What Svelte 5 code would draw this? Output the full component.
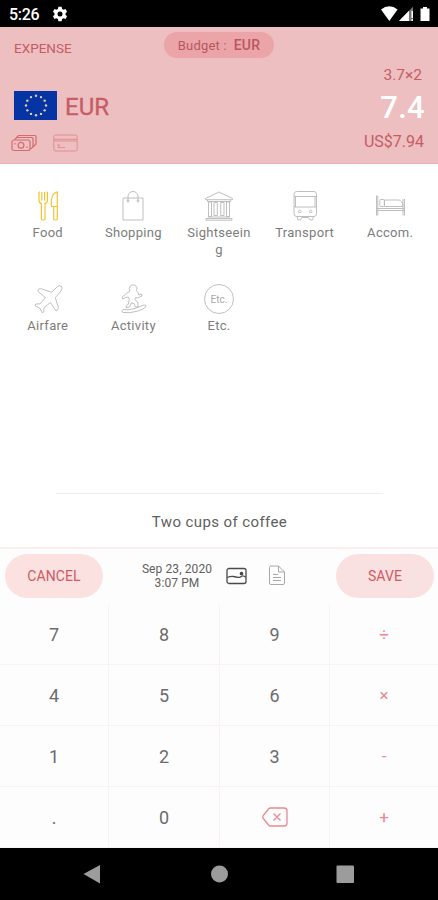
<script>
  let selected = $state("Food")
  let budget = $state("EUR")

  const categories = ["Food", "Shopping", "Sightseeing", "Transport", "Accom.", "Airfare", "Activity", "Etc."]
  const keys = ["7", "8", "9", "÷", "4", "5", "6", "×", "1", "2", "3", "-", ".", "0", "del", "+"]
  const operators = ["÷", "×", "-", "+"]

  // 12 flag stars on a circle
  const stars = Array.from({ length: 12 }, (_, i) => ({
    x: 22 + 10 * Math.sin((i * Math.PI) / 6),
    y: 14.5 - 9.7 * Math.cos((i * Math.PI) / 6),
  }))
</script>

{#snippet icon(name)}
  <svg class="icon" width="32" height="32" viewBox="0 0 32 32">
    {#if name === "Food"}
      <path d="M7 2v8q0 3 2.4 3.6V29q0 1 1.8 1t1.8-1V13.600q2.400-.6 2.400-3.600V2M9.800 2v8.500M12.600 2v8.500M7 2h1M14.400 2h1" />
      <path d="M25.300 1.800v27.200q0 1-1.800 1t-1.800-1V16.500h-2.200q-1.500-12.500 5.800-14.700zM21.700 16.500h3.600" />
    {:else if name === "Shopping"}
      <path d="M6 8h20v22H6z" />
      <path d="M11 11V6.500a5 5 0 0 1 10 0V11" />
      <circle cx="11" cy="11" r="1" /><circle cx="21" cy="11" r="1" />
    {:else if name === "Sightseeing"}
      <path d="M16 2 2.500 8.500v1.200h27V8.500zM4.500 10v1.500h23V10M5 27h22M3 28.500h26v1.700H3z" />
      <path d="M5.500 12v14.500h3V12zM11 12.500h3.300v13H11zM17.700 12.500H21v13h-3.300zM23.500 12v14.500h3V12z" />
    {:else if name === "Transport"}
      <path d="M7.500 1.500h17.500q2.500 0 2.500 3v19q0 3-2.500 3H7.500q-2.500 0-2.500-3v-19q0-3 2.500-3zM5 6.500h22.500M5 17h22.500M6.500 6.500V17M26 6.500V17" />
      <path d="M8 26.500l1 3.500h2.500l1.500-2.500h6.500l1.500 2.500h2.500l1-3.500" />
      <circle cx="10.800" cy="21.500" r="1.300" /><circle cx="21.700" cy="21.500" r="1.300" />
    {:else if name === "Accom."}
      <path d="M2.500 5.500v20M3.800 5.500v20M29 9v16.500M30.500 9v16.500M3 18.500h27.500M3 20.500h27.500" />
      <rect x="5.800" y="9.500" width="4.500" height="7" rx="1" />
      <path d="M10.500 10h14.500q3.500.5 4 6.500H10.500z" />
    {:else if name === "Airfare"}
      <path d="M29 3.200q-1.700-1.300-3.500.4L19.500 9.300 8.500 5.500q-2.500.3-2.700 2.700l7.500 6.300-5 6.300-4.500.2-.8 1.700 4.700 2.300 2.500 4.700 1.600-.7.200-4.500 6.500-5 5.500 8.500q2-.8 2.500-3.300l-3.200-10 5.500-6.500q2.200-2.700.7-5z" />
    {:else if name === "Activity"}
      <path d="M13 8a3.900 3.900 0 1 1 6.500-.3q2 1.300 2.200 4.300l2.800-1 .5 2-4.500 2-1.800-.5-1 2 3 2.500.3 4.800h-3l-.5-3-3-1-2 4.200-3.500.8.300-2.300 2-1.200 1-4.800-.8-2.500-3.200.5-2.500 1.500-.8-1.700 3.500-3z" />
      <path d="M6 26.500q4 1 12-1l9-3.500q2.500-.2 1.800 1.700-2.500 3-8.500 4.500-7.500 2.200-14.500 1.300-2-1.800.2-3z" />
    {:else}
      <circle cx="16" cy="16" r="14.500" />
      <text x="16" y="19.600" text-anchor="middle">Etc.</text>
    {/if}
  </svg>
{/snippet}

<div class="screen">
  <div class="status">
    <span class="time">5:26</span>
    <svg class="gear" width="14" height="16" viewBox="0 0 14 16">
      <path d="M5.400.8h3.200l.5 2.200 1.500.8 2-.7L14 5.700l-1.500 1.500v1.600L14 10.300l-1.400 2.600-2-.7-1.500.8-.5 2.200H5.400L4.900 13l-1.500-.8-2 .7L0 10.300l1.500-1.500V7.200L0 5.700l1.400-2.600 2 .7L4.900 3zM7 5.500a2.500 2.500 0 1 0 0 5 2.500 2.500 0 0 0 0-5z" fill="#fff" fill-rule="evenodd" />
    </svg>
    <svg class="signals" width="50" height="16" viewBox="0 0 50 16">
      <path d="M0 3.500q8.300-6.500 16.600 0L8.300 15z" fill="#fff" />
      <path d="M18 15 32 .7V15z" fill="#777" />
      <path d="M18 15 28 4.800V15zM30.500 5h1.500v7h-1.500zM30.500 13.300H32V15h-1.500z" fill="#fff" />
      <path d="M39.500 2.500H42V1h4v1.500h2.500V15h-9z" fill="#fff" />
    </svg>
  </div>

  <header>
    <div class="top">
      <span class="kind">EXPENSE</span>
      <span class="budget">Budget :&nbsp; <b>{budget}</b></span>
    </div>
    <div class="formula">3.7×2</div>
    <div class="amount">
      <svg width="43" height="29" viewBox="0 0 43 29">
        <rect width="43" height="29" fill="#0634a4" />
        {#each stars as s}
          <circle cx={s.x} cy={s.y} r="1.200" fill="#e3d2a0" />
        {/each}
      </svg>
      <span class="currency">EUR</span>
      <span class="value">7.4</span>
    </div>
    <div class="pay">
      <svg width="26" height="18" viewBox="0 0 26 18" class="cash">
        <rect x="1" y="6" width="18" height="10.500" rx="2" />
        <circle cx="10" cy="11.300" r="2.900" />
        <path d="M3.500 5.500 6 3.500h15q1 0 1 1V13l-2.500 2M5.500 3.500l2-2H24q1 0 1 1V10l-2.500 2.500M4 9v1.500M16 12.500V14" />
      </svg>
      <svg width="25" height="18" viewBox="0 0 25 18" class="card">
        <rect x=".8" y="1" width="23.400" height="16" rx="1.800" />
        <path d="M1 5.300h23M1 7h23M4 11h3l-2 2.500h7" />
      </svg>
      <span class="converted">US$7.94</span>
    </div>
  </header>

  <div class="categories">
    {#each categories as c}
      <div class="category" class:active={c === selected}>
        {@render icon(c)}
        <span class="label">{c}</span>
      </div>
    {/each}
  </div>

  <div class="memo">Two cups of coffee</div>

  <div class="actions">
    <button>CANCEL</button>
    <div class="date">Sep 23, 2020<br />3:07 PM</div>
    <svg class="photo" width="21" height="18" viewBox="0 0 21 18">
      <rect x="1" y="1.500" width="19" height="15" rx="2" />
      <path d="M1 10.500q4-1.500 6.500-1t4.500.8 3.500-1 4.500 1" />
      <circle cx="15.500" cy="6.500" r="1.200" fill="#444" />
    </svg>
    <svg class="note" width="18" height="21" viewBox="0 0 18 21">
      <path d="M3 1h7.500l6 6v11q0 1.500-1.500 1.500H3q-1.500 0-1.500-1.500V2.500Q1.500 1 3 1zM10.500 1v6h6M5 9.500h5M5 12.500h8M5 15.500h8" />
    </svg>
    <button class="save">SAVE</button>
  </div>

  <div class="keypad">
    {#each keys as k}
      <div class="key" class:op={operators.includes(k)}>
        {#if k === "del"}
          <svg width="26" height="20" viewBox="0 0 26 20" class="del">
            <path d="M8.500 1H22q3 0 3 3v12q0 3-3 3H8.500q-1 0-1.800-.8L1.300 11.500q-1-1.500 0-3l5.400-6.700Q7.500 1 8.500 1zM11.500 6.500l7 7M18.500 6.500l-7 7" />
          </svg>
        {:else}
          {k}
        {/if}
      </div>
    {/each}
  </div>

  <nav>
    <svg width="438" height="52" viewBox="0 0 438 52">
      <path d="M83.500 26 100 17v18.500z" />
      <circle cx="219.500" cy="26" r="8.500" />
      <rect x="336.500" y="17.500" width="17.500" height="17.500" rx="1" />
    </svg>
  </nav>
</div>

<style>
  :global(body) {
    margin: 0;
    background: #fff;
  }
  .screen {
    width: 438px;
    height: 900px;
    display: flex;
    flex-direction: column;
    overflow: hidden;
    font-family: Roboto, sans-serif;
    background: #fff;
  }
  .status {
    height: 27px;
    flex: none;
    box-sizing: border-box;
    padding: 1px 8px 0 9px;
    display: flex;
    align-items: center;
    background: #000;
    color: #fff;
  }
  .time {
    font-size: 16px;
    font-weight: 500;
    letter-spacing: -0.3px;
    width: 44px;
  }
  .signals {
    margin-left: auto;
    margin-right: -1px;
  }

  header {
    height: 137px;
    flex: none;
    box-sizing: border-box;
    padding: 5px 14px 0;
    background: #edbfc0;
    border-bottom: 1px solid #eeb0b4;
    color: #c65c64;
  }
  .top {
    display: grid;
    grid-template-columns: 1fr 110px 1fr;
    align-items: center;
    height: 27px;
  }
  .kind {
    font-size: 13.5px;
    padding-top: 5px;
  }
  .budget {
    height: 26px;
    line-height: 27px;
    border-radius: 13px;
    background: #eba4a8;
    font-size: 13px;
    text-align: center;
    color: #b9575f;
    letter-spacing: 0.2px;
    margin-top: -1px;

    b {
      font-size: 14px;
      font-weight: 500;
    }
  }
  .formula {
    height: 32px;
    line-height: 33px;
    text-align: right;
    font-size: 15.5px;
    padding-right: 2px;
  }
  .amount {
    display: flex;
    align-items: center;
    height: 29px;
  }
  .currency {
    font-size: 24px;
    margin-left: 8px;
    padding-top: 2px;
    -webkit-text-stroke: 0.3px #c65c64;
  }
  .value {
    margin-left: auto;
    color: #fff;
    font-size: 31px;
    font-weight: 500;
    line-height: 29px;
    letter-spacing: 0.3px;
    padding-top: 3px;
    margin-right: -1px;
  }
  .pay {
    display: flex;
    align-items: center;
    height: 42px;
    margin-left: -3px;
    padding-top: 2px;

    svg {
      fill: none;
      stroke: #d46b71;
      stroke-width: 1.2;
    }
    .card {
      margin-left: 16px;
      stroke: #e28d92;
      stroke-width: 1;
    }
  }
  .converted {
    margin-left: auto;
    font-size: 16px;
    line-height: 16px;
    padding-bottom: 3px;
  }

  .categories {
    height: 329px;
    flex: none;
    box-sizing: border-box;
    padding: 26px 5px 0;
    display: grid;
    grid-template-columns: repeat(5, 1fr);
    grid-auto-rows: 92.5px;
  }
  .category {
    display: flex;
    flex-direction: column;
    align-items: center;
    color: #7c7c7c;
  }
  .icon {
    fill: none;
    stroke: #b8b8b8;
    stroke-width: 0.9;
    stroke-linejoin: round;
    flex: none;

    text {
      font-size: 10px;
      fill: #a8a8a8;
      stroke: none;
    }
  }
  .active .icon {
    stroke: #f4c430;
    stroke-width: 1.2;
  }
  .label {
    width: 66px;
    margin-top: 2px;
    font-size: 13px;
    line-height: 17px;
    letter-spacing: 0.3px;
    text-align: center;
    word-break: break-all;
  }

  .memo {
    height: 53px;
    flex: none;
    margin: 0 55px 0 56px;
    border-top: 1px solid #eee;
    line-height: 57px;
    text-align: center;
    font-size: 15px;
    letter-spacing: 0.4px;
    color: #606060;
  }

  .actions {
    height: 57px;
    flex: none;
    box-sizing: border-box;
    display: flex;
    align-items: center;
    padding: 0 4px 2px 5px;
    border-top: 2px solid #fbeeee;
    background: #fdfdfd;
    color: #606060;

    svg {
      fill: none;
      stroke: #4a4a4a;
      stroke-width: 1.3;
      margin-left: 13px;
    }
    .note {
      stroke: #a8a8a8;
      stroke-width: 1;
      margin-left: 21px;
    }
  }
  button {
    width: 98px;
    height: 44px;
    padding: 0;
    border: 0;
    border-radius: 22px;
    background: #fbe2e0;
    color: #cf5963;
    font: 14px Roboto, sans-serif;
    letter-spacing: 0.1px;
  }
  .save {
    margin-left: auto;
    background: #fae1e1;
  }
  .date {
    width: 72px;
    margin-left: 38px;
    font-size: 12px;
    line-height: 14px;
    letter-spacing: 0.1px;
    text-align: center;
    white-space: nowrap;
  }

  .keypad {
    height: 244px;
    flex: none;
    display: grid;
    grid-template-columns: 109px 111px 110px 108px;
    grid-template-rows: repeat(4, 1fr);
    background: #fdfdfd;
  }
  .key {
    box-sizing: border-box;
    display: flex;
    align-items: center;
    justify-content: center;
    border-right: 1px solid #f9f3f2;
    border-bottom: 1px solid #f9f3f2;
    font-size: 18px;
    color: #6c6c6c;
  }
  .op {
    color: #ec8790;
    border-right: 0;
    font-size: 17px;
  }
  .del {
    fill: none;
    stroke: #ec8790;
    stroke-width: 1.3;
  }

  nav {
    height: 52px;
    flex: none;
    background: #000;

    svg {
      display: block;
      fill: #9c9c9c;
    }
  }
</style>
